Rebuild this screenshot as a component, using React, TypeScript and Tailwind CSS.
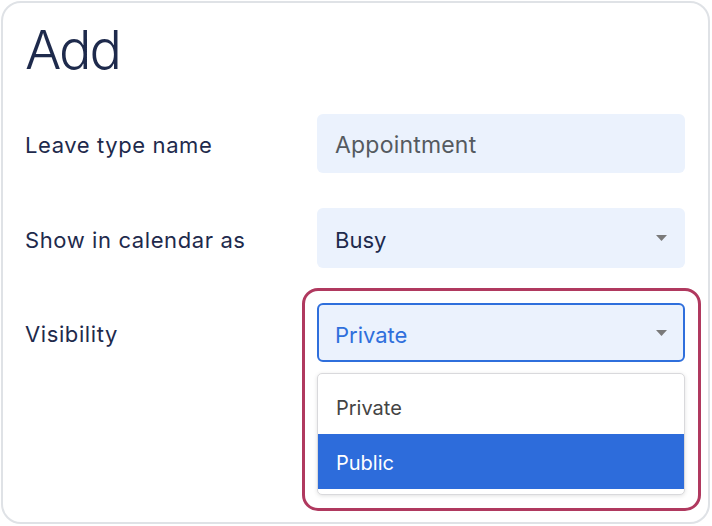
import React from "react";

function Caret() {
  return (
    <svg width="11" height="6" viewBox="0 0 11 6" className="shrink-0">
      <path d="M0 0 L11 0 L5.5 6 Z" fill="#7a7a7a" />
    </svg>
  );
}

export default function App() {
  const font = { fontFamily: "Inter, 'Noto Sans', sans-serif" };
  return (
    <div className="w-[712px] h-[526px] bg-white p-px" style={font}>
      <div className="h-[523px] w-[709px] rounded-[20px] border-2 border-[#dfe2e6] bg-white pl-[22px] pr-[23px]">
        <div className="pt-[17px] text-[54px] font-light leading-[60px] text-[#1e2a4c] tracking-[-2px]">Add</div>
        <div className="mt-[34px] flex flex-col gap-[35px]">
          <div className="flex items-center">
            <div className="flex-1 text-[22px] tracking-[0.6px] text-[#1e2a4c] pt-[4px]">Leave type name</div>
            <div className="w-[368px] h-[59px] rounded-[6px] bg-[#ebf2fd] flex items-center px-[18px] pt-[3px] text-[23px] tracking-[0.2px] text-[#555a60]">
              Appointment
            </div>
          </div>
          <div className="flex items-center">
            <div className="flex-1 text-[22px] tracking-[0.6px] text-[#1e2a4c] pt-[4px]">Show in calendar as</div>
            <div className="w-[368px] h-[60px] rounded-[6px] bg-[#ebf2fd] flex items-center justify-between pl-[18px] pr-[18px] text-[22px] text-[#1e2a4c]">
              <span className="pt-[5px]">Busy</span>
              <Caret />
            </div>
          </div>
          <div className="flex items-center">
            <div className="flex-1 text-[22px] tracking-[0.6px] text-[#1e2a4c] pt-[4px]">Visibility</div>
            <div className="relative w-[368px]">
              <div className="absolute left-[-15px] top-[-15px] w-[399px] h-[223px] rounded-[16px] border-[3px] border-[#b0395f]" />
              <div className="relative h-[59px] rounded-[6px] bg-[#ebf2fd] border-2 border-[#2f6fdc] flex items-center justify-between pl-[16px] pr-[16px] text-[22px] text-[#2f6fdc]">
                <span className="pt-[5px]">Private</span>
                <Caret />
              </div>
              <div className="absolute left-0 top-[70px] w-[368px] rounded-[5px] border border-[#d9d9dc] bg-white shadow-[0_1px_4px_rgba(0,0,0,0.12)] py-[5px] overflow-hidden">
                <div className="h-[55px] flex items-center pl-[18px] pt-[3px] text-[20px] text-[#444]">Private</div>
                <div className="h-[55px] flex items-center pl-[18px] pt-[3px] text-[20px] text-white bg-[#2d6cdb]">Public</div>
              </div>
            </div>
          </div>
        </div>
      </div>
    </div>
  );
}
